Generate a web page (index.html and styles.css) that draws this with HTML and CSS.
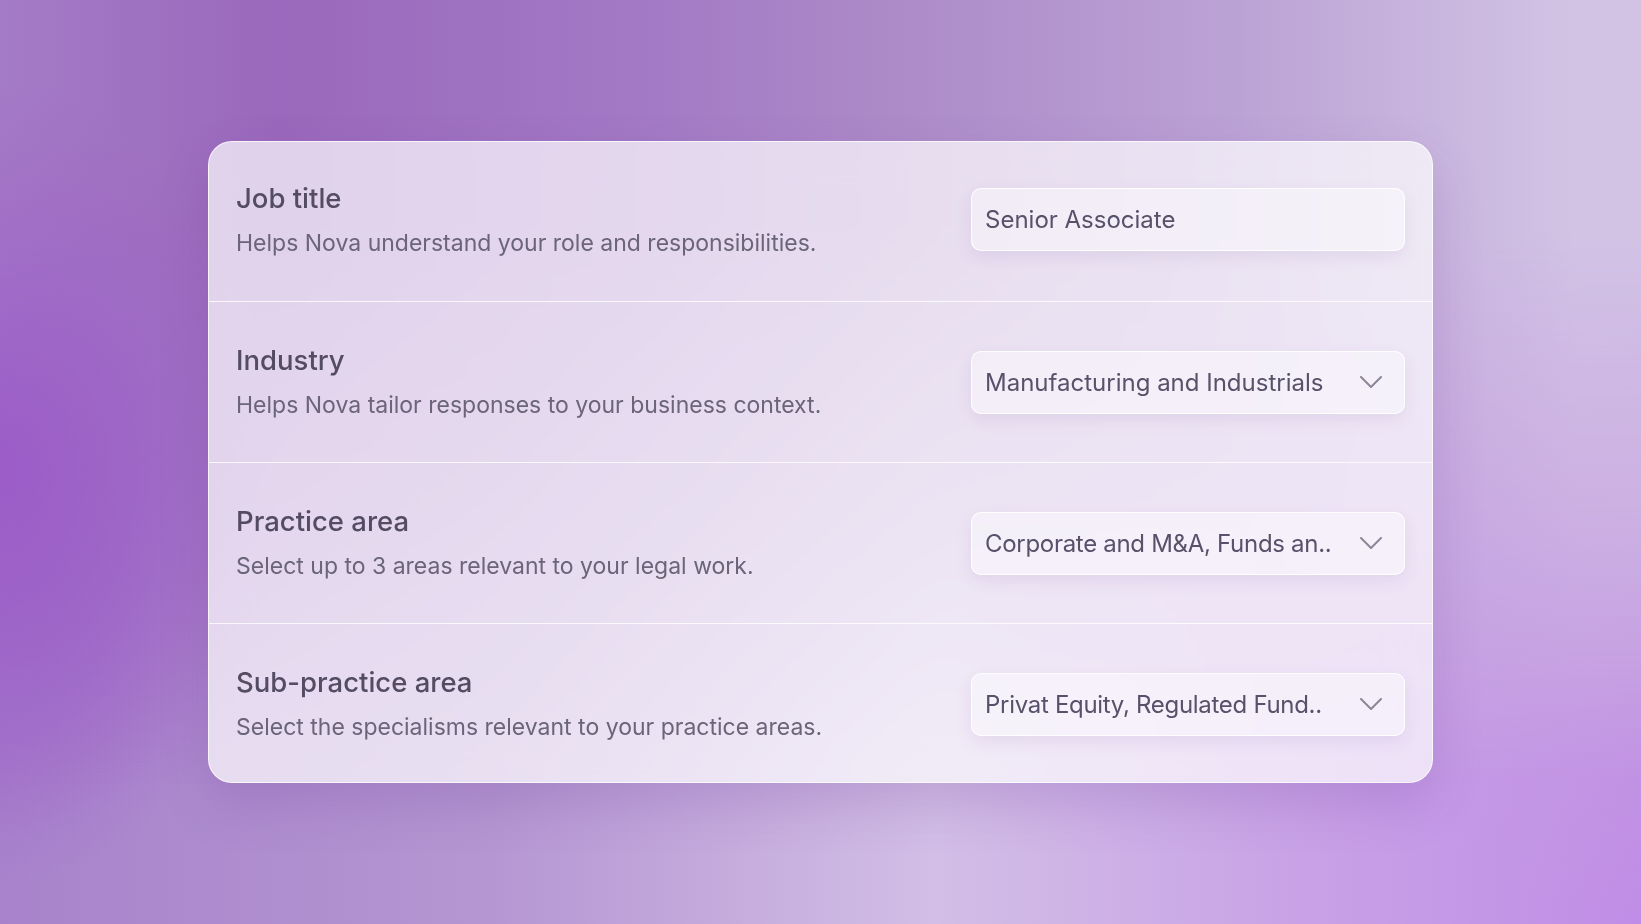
FILE: index.html
```html
<!DOCTYPE html>
<html lang="en">
<head>
<meta charset="utf-8">
<title>Profile settings</title>
<link rel="stylesheet" href="styles.css">
</head>
<body>
<main class="stage">
  <section class="card">
    <div class="row">
      <div class="label">
        <h2 class="title">Job title</h2>
        <p class="desc">Helps Nova understand your role and responsibilities.</p>
      </div>
      <div class="field"><span class="value">Senior Associate</span></div>
    </div>
    <div class="row">
      <div class="label">
        <h2 class="title">Industry</h2>
        <p class="desc">Helps Nova tailor responses to your business context.</p>
      </div>
      <div class="field">
        <span class="value">Manufacturing and Industrials</span>
        <svg class="chev" width="22" height="12" viewBox="0 0 22 12"><path d="M1 1 L11 11 L21 1"/></svg>
      </div>
    </div>
    <div class="row">
      <div class="label">
        <h2 class="title">Practice area</h2>
        <p class="desc">Select up to 3 areas relevant to your legal work.</p>
      </div>
      <div class="field">
        <span class="value trunc">Corporate and M&amp;A, Funds an..</span>
        <svg class="chev" width="22" height="12" viewBox="0 0 22 12"><path d="M1 1 L11 11 L21 1"/></svg>
      </div>
    </div>
    <div class="row">
      <div class="label">
        <h2 class="title">Sub-practice area</h2>
        <p class="desc">Select the specialisms relevant to your practice areas.</p>
      </div>
      <div class="field">
        <span class="value trunc">Privat Equity, Regulated Fund..</span>
        <svg class="chev" width="22" height="12" viewBox="0 0 22 12"><path d="M1 1 L11 11 L21 1"/></svg>
      </div>
    </div>
  </section>
</main>
</body>
</html>
```
FILE: styles.css
```css
* { box-sizing: border-box; }
html, body { margin: 0; padding: 0; height: 100%; }
body {
  font-family: Inter, "Noto Sans", "Liberation Sans", sans-serif;
  overflow: hidden;
}
.stage {
  position: relative;
  height: 100vh;
  display: flex;
  align-items: center;
  justify-content: center;
  background:
    radial-gradient(ellipse 300px 420px at 0% 50%, rgba(152, 84, 200, 0.85), rgba(152, 84, 200, 0) 100%),
    radial-gradient(ellipse 320px 420px at 100% 55%, rgba(200, 160, 222, 0.7), rgba(200, 160, 222, 0) 100%),
    linear-gradient(90deg, #a883cb 0%, #b596d2 30%, #d2bee6 57%, #c9a3e6 78%, #bf8de6 100%);
}
.stage::before {
  content: "";
  position: absolute;
  inset: 0;
  background: linear-gradient(90deg, #a47bc6 0%, #9a68bc 17%, #a37ac5 40%, #ad8bc8 55%, #bba2d5 75%, #d2c3e4 96%);
  -webkit-mask-image: linear-gradient(180deg, #000 0%, #000 25%, rgba(0,0,0,0.55) 55%, rgba(0,0,0,0) 85%);
  mask-image: linear-gradient(180deg, #000 0%, #000 25%, rgba(0,0,0,0.55) 55%, rgba(0,0,0,0) 85%);
  z-index: 0;
}
.stage::after {
  content: "";
  position: absolute;
  inset: 0;
  background: radial-gradient(ellipse 260px 380px at 0% 50%, rgba(154, 86, 200, 0.75), rgba(154, 86, 200, 0) 100%);
  z-index: 0;
}
.card {
  position: relative;
  z-index: 1;
  width: 1225px;
  border-radius: 24px;
  background: rgba(255, 255, 255, 0.70);
  border: 1px solid rgba(255, 255, 255, 0.75);
  box-shadow: 0 22px 50px rgba(105, 55, 150, 0.20);
  backdrop-filter: blur(20px);
  overflow: hidden;
}
.row {
  height: 161px;
  padding: 0 27px;
  display: flex;
  align-items: center;
  justify-content: space-between;
}
.row:first-child { height: 159px; padding-bottom: 4px; }
.row:last-child { height: 159px; padding-top: 2px; }
.row + .row { border-top: 1px solid rgba(255, 255, 255, 0.8); }
.label { display: flex; flex-direction: column; gap: 14px; }
.title {
  margin: 0;
  font-size: 27.5px;
  line-height: 32px;
  font-weight: 500;
  color: #534c62;
}
.desc {
  margin: 0;
  font-size: 23px;
  line-height: 30px;
  font-weight: 400;
  color: #6b657a;
}
.field {
  width: 434px;
  height: 63px;
  border-radius: 10px;
  border: 1px solid rgba(255, 255, 255, 0.9);
  background: rgba(255, 255, 255, 0.42);
  box-shadow: 0 6px 16px rgba(110, 70, 150, 0.10);
  padding: 0 22px 0 13px;
  display: flex;
  align-items: center;
  justify-content: space-between;
}
.value {
  font-size: 24px;
  color: #57516a;
  white-space: nowrap;
}
.value.trunc { letter-spacing: -0.3px; }
.chev path {
  fill: none;
  stroke: #8c8698;
  stroke-width: 2;
  stroke-linecap: round;
  stroke-linejoin: round;
}
```
